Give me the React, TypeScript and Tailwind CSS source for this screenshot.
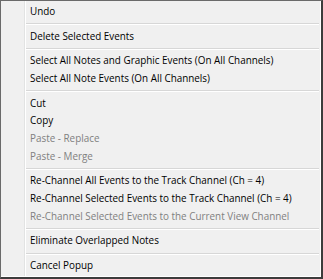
import React from "react";

type Item = { label: string; disabled?: boolean } | "sep";

const items: Item[] = [
  { label: "Undo" },
  "sep",
  { label: "Delete Selected Events" },
  "sep",
  { label: "Select All Notes and Graphic Events (On All Channels)" },
  { label: "Select All Note Events (On All Channels)" },
  "sep",
  { label: "Cut" },
  { label: "Copy" },
  { label: "Paste - Replace", disabled: true },
  { label: "Paste - Merge", disabled: true },
  "sep",
  { label: "Re-Channel All Events to the Track Channel (Ch = 4)" },
  { label: "Re-Channel Selected Events to the Track Channel (Ch = 4)" },
  { label: "Re-Channel Selected Events to the Current View Channel", disabled: true },
  "sep",
  { label: "Eliminate Overlapped Notes" },
  "sep",
  { label: "Cancel Popup" },
];

export default function App() {
  return (
    <div className="w-[323px] h-[279px] bg-white">
      <div
        className="w-[323px] h-[279px] border-l border-t border-r-2 border-b-2 border-l-[#6a6a6a] border-t-[#6a6a6a] border-r-[#3c3c3c] border-b-[#3c3c3c] bg-[#f0f0f0]"
        style={{ fontFamily: '"Open Sans", "Noto Sans", sans-serif' }}
      >
        <div className="relative h-full border-r border-b border-r-white border-b-white py-[2px]">
          <div className="absolute left-[23px] top-0 bottom-0 w-px bg-[#e2e3e3]" />
          <div className="absolute left-[24px] top-0 bottom-0 w-px bg-white" />
          {items.map((it, i) =>
            it === "sep" ? (
              <div key={i} className="h-[7px] flex flex-col justify-center pl-[24px] pr-[1px]">
                <div className="h-px bg-[#d7d7d7]" />
                <div className="h-px bg-white" />
              </div>
            ) : (
              <div
                key={i}
                className={`h-[17.7px] flex items-center pl-[29px] text-[9.9px] leading-none whitespace-nowrap ${
                  it.disabled ? "text-[#808080]" : "text-black"
                }`}
              >
                {it.label}
              </div>
            )
          )}
        </div>
      </div>
    </div>
  );
}
